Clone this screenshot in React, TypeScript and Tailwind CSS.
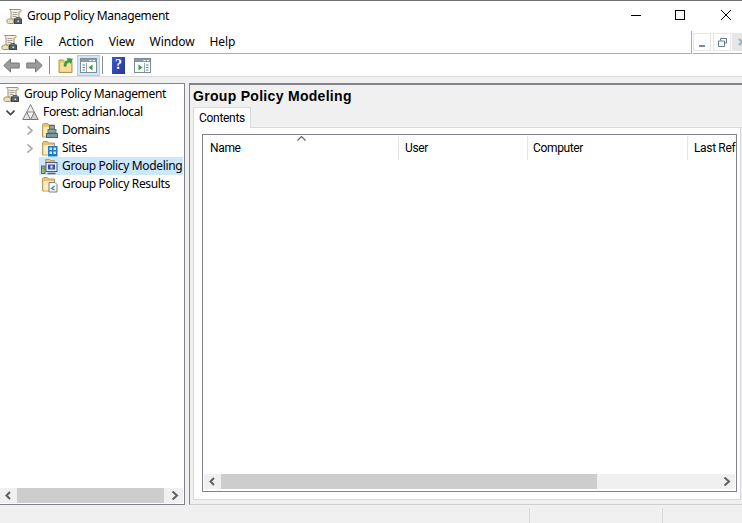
import type { ReactNode } from "react";

const font = { fontFamily: '"Noto Sans", "Open Sans", sans-serif' };

function ScrollIcon() {
  return (
    <svg width="17" height="17" viewBox="0 0 17 17" className="shrink-0">
      <path d="M3.500 1.500h11c1 0 1 2.500-.5 2.500H13v7H5V4C5 3 4 2 3.500 1.500z" fill="#f6efd6" stroke="#9c9272" />
      <path d="M6.500 4.500h5M6.500 6.500h5M6.500 8.500h4" stroke="#a3a3a3" />
      <path d="M1 12c1.500-1.500 5-1.500 6.500 0v3.500H2.500c-1.500 0-2-2-1.500-3.500z" fill="#eadfb6" stroke="#a4996f" />
      <rect x="8.500" y="11" width="7" height="4.500" fill="#56656d" stroke="#3a474e" />
      <path d="M10 11V9.500h4V11" fill="none" stroke="#56626a" />
      <rect x="11.500" y="12.500" width="1.500" height="1.500" fill="#dfe6ea" />
    </svg>
  );
}

function ForestIcon() {
  return (
    <svg width="17" height="16" viewBox="0 0 17 16" className="shrink-0">
      <path d="M8.500 .5l3.800 7.500H4.700z" fill="#efefef" stroke="#858585" />
      <path d="M4.700 8l3.800 7.500H.8z" fill="#e2e2e2" stroke="#777" />
      <path d="M12.300 8l3.900 7.500H8.500z" fill="#cfcfcf" stroke="#777" />
    </svg>
  );
}

function FolderBase() {
  return (
    <>
      <path d="M1.500 15V2.500l1-1h4l1.500 1.500h5.500V15z" fill="#e6c272" stroke="#bd9c60" />
      <path d="M2.500 5h10v9.500h-10z" fill="#fbeebc" />
    </>
  );
}

function DomainsIcon() {
  return (
    <svg width="17" height="17" viewBox="0 0 17 17" className="shrink-0">
      <FolderBase />
      <rect x="8.500" y="3.500" width="5" height="3.500" fill="#8ba5a9" stroke="#5c7478" />
      <rect x="7" y="7.500" width="8" height="3.500" fill="#8ba5a9" stroke="#5c7478" />
      <rect x="5.500" y="11.500" width="11" height="4" fill="#7b979b" stroke="#4f6467" />
      <path d="M7.500 13.500h1M10.500 13.500h1M13.500 13.500h1" stroke="#57c05a" />
    </svg>
  );
}

function SitesIcon() {
  return (
    <svg width="17" height="17" viewBox="0 0 17 17" className="shrink-0">
      <FolderBase />
      <rect x="7" y="6" width="9.500" height="10.500" fill="#1f78c8" />
      <path d="M8.500 7.500H11V10H8.500zM12.500 7.500H15V10h-2.500zM8.500 11.500H11V14H8.500zM12.500 11.500H15V14h-2.500z" fill="#cfe9fb" />
    </svg>
  );
}

function ModelingIcon() {
  return (
    <svg width="17" height="17" viewBox="0 0 17 17" className="shrink-0">
      <path d="M4.500 5V1.500h4l1 1h4V5z" fill="#e6c272" stroke="#bd9c60" />
      <rect x=".5" y="8" width="3.500" height="7.500" fill="#a7b38f" stroke="#5d6a55" />
      <rect x="1.300" y="9.500" width="2" height="1.500" fill="#4ea34e" />
      <rect x="5" y="4.500" width="11" height="9" fill="#e6eaf4" stroke="#4e5a7a" />
      <rect x="7" y="6.500" width="7" height="5" fill="#3a4fa8" />
      <path d="M9.500 7.500h2v3h-2z" fill="#dce4fa" />
      <path d="M6.500 15.500h8" stroke="#5a5f6c" strokeWidth="1.500" />
    </svg>
  );
}

function ResultsIcon() {
  return (
    <svg width="17" height="17" viewBox="0 0 17 17" className="shrink-0">
      <FolderBase />
      <path d="M8 6.500h6l2 2v7.500H8z" fill="#fbfbfb" stroke="#7f7f7f" />
      <path d="M13.500 10l-3 2.500 3 1.500" fill="none" stroke="#2c7cc4" strokeWidth="1.200" />
    </svg>
  );
}

function NavArrow({ flip }: { flip?: boolean }) {
  return (
    <svg width="17" height="15" viewBox="0 0 17 15" className={flip ? "shrink-0 -scale-x-100" : "shrink-0"}>
      <path d="M7.500 1L.8 7.500 7.500 14V10h8.700V5H7.500z" fill="#9c9c9c" stroke="#777" />
    </svg>
  );
}

function UpFolderIcon() {
  return (
    <svg width="16" height="18" viewBox="0 0 16 18" className="shrink-0">
      <path d="M1 5.500V16.500h13V5.500H7L5.500 4H1z" fill="#eccb78" stroke="#b59250" />
      <path d="M2 7h11v8.500H2z" fill="#f7df98" />
      <path d="M6 10c0-3 1.500-5 4-6L9 2.500l5.500.5L12.500 7.500 11.300 5.800C9.500 6.500 8 8.500 8 10.500z" fill="#35a83a" stroke="#1f7f28" strokeWidth=".5" />
    </svg>
  );
}

function PaneIcon({ side }: { side: "left" | "right" }) {
  return (
    <svg width="17" height="15" viewBox="0 0 17 15" className="shrink-0">
      <rect x=".5" y=".5" width="16" height="14" fill="#fdfdfd" stroke="#7e8a94" />
      <rect x="1" y="1" width="15" height="3" fill="#8c98a2" />
      <path d="M13 2.500h2M9.500 2.500h2" stroke="#ffffff" />
      {side === "left" ? (
        <>
          <path d="M6.500 5v9" stroke="#9aa4ac" />
          <path d="M2.500 7h2.500M2.500 9.500h2.500M2.500 12h2.500" stroke="#3f86c6" />
          <path d="M12.500 6.500v6L8.500 9.500z" fill="#2fa63a" />
        </>
      ) : (
        <>
          <path d="M10.500 5v9" stroke="#9aa4ac" />
          <path d="M12 7h2.500M12 9.500h2.500M12 12h2.500" stroke="#3f86c6" />
          <path d="M4.500 6.500v6l4-3z" fill="#2fa63a" />
        </>
      )}
    </svg>
  );
}

function HelpIcon() {
  return (
    <div className="flex h-[17px] w-[13px] shrink-0 items-center justify-center bg-gradient-to-br from-[#3d58c8] to-[#28379a] text-[14px] leading-none font-bold text-white" style={{ fontFamily: '"Liberation Serif", serif' }}>
      ?
    </div>
  );
}

function Chevron({ dir, color, bold }: { dir: "left" | "right" | "down"; color: string; bold?: boolean }) {
  const d = dir === "left" ? "M6 1L2.500 4.500 6 8" : dir === "right" ? "M2.500 .5L7 4.500 2.500 8.500" : "M.5 2.500L4.500 6.500 8.500 2.500";
  return (
    <svg width="9" height="9" viewBox="0 0 9 9" className="shrink-0">
      <path d={d} fill="none" stroke={color} strokeWidth={bold ? 2 : 1.6} />
    </svg>
  );
}

function TreeRow({
  indent,
  arrow,
  icon,
  label,
  selected,
}: {
  indent: string;
  arrow?: ReactNode;
  icon: ReactNode;
  label: string;
  selected?: boolean;
}) {
  return (
    <div className={`flex h-[18px] items-center ${indent}`}>
      <div className="flex w-[15px] shrink-0 justify-start pl-[1px]">{arrow}</div>
      <div className={`flex h-[18px] flex-1 items-center gap-[4px] pl-[2px] whitespace-nowrap ${selected ? "bg-[#cce8ff]" : ""}`}>
        {icon}
        <span>{label}</span>
      </div>
    </div>
  );
}

function HScroll({ thumb }: { thumb: string }) {
  return (
    <div className="flex h-[15px] w-full shrink-0 items-center bg-[#f0f0f0]">
      <div className="flex w-[17px] shrink-0 justify-center">
        <Chevron dir="left" color="#606060" bold />
      </div>
      <div className={`h-full shrink-0 bg-[#cdcdcd] ${thumb}`} />
      <div className="flex-1" />
      <div className="flex w-[17px] shrink-0 justify-center">
        <Chevron dir="right" color="#606060" bold />
      </div>
    </div>
  );
}

export default function App() {
  return (
    <div className="flex h-[523px] w-[742px] flex-col overflow-hidden bg-[#f0f0f0] text-[12px] text-black" style={font}>
      {/* title bar */}
      <div className="flex h-[31px] shrink-0 items-center border-t border-[#6f6f6f] bg-white">
        <div className="ml-[6px]">
          <ScrollIcon />
        </div>
        <span className="ml-[4px] tracking-[-0.35px]">Group Policy Management</span>
        <div className="mb-[2px] ml-auto flex items-center">
          <svg width="112" height="14" viewBox="0 0 112 14">
            <path d="M1 7.500h10" stroke="#000" />
            <rect x="45.500" y="2.500" width="9" height="9" fill="none" stroke="#000" />
            <path d="M91 2l10 10M101 2L91 12" stroke="#000" />
          </svg>
        </div>
      </div>

      {/* menu bar */}
      <div className="flex h-[23px] shrink-0 items-stretch bg-white">
        <div className="flex w-[692px] shrink-0 items-center border-r border-b border-[#a8abb2] pl-[1px]">
          <ScrollIcon />
          <div className="ml-[6px] flex gap-[15px] tracking-[-0.1px]">
            <span>File</span>
            <span className="ml-[1px]">Action</span>
            <span>View</span>
            <span>Window</span>
            <span>Help</span>
          </div>
        </div>
        <div className="ml-[1px] flex min-w-0 flex-1 items-center gap-[1px] overflow-hidden border-b border-[#a8abb2]">
          <div className="flex h-[18px] w-[18px] shrink-0 items-end justify-center border border-[#e6e6e6] pb-[3px]">
            <div className="h-[2px] w-[6px] bg-[#7c8a9a]" />
          </div>
          <div className="ml-[1px] flex h-[18px] w-[18px] shrink-0 items-center justify-center border border-[#e6e6e6]">
            <svg width="9" height="9" viewBox="0 0 9 9">
              <path d="M2.500 2.500V.5h6v4.500H6.500M.5 3h6v5.500h-6z" fill="none" stroke="#66768a" />
            </svg>
          </div>
          <div className="flex h-[18px] w-[18px] shrink-0 items-center justify-start bg-[#e6e6e6] pl-[6px]">
            <svg width="8" height="8" viewBox="0 0 8 8">
              <path d="M1 1l6 6M7 1L1 7" stroke="#a0aebe" strokeWidth="2" />
            </svg>
          </div>
        </div>
      </div>

      {/* toolbar */}
      <div className="flex h-[23px] shrink-0 items-center border-b border-[#d9d9d9] bg-white pl-[3px]">
        <NavArrow />
        <div className="ml-[6px]">
          <NavArrow flip />
        </div>
        <div className="ml-[6px] h-[18px] w-px bg-[#8c8c8c]" />
        <div className="ml-[8px]">
          <UpFolderIcon />
        </div>
        <div className="ml-[3px] flex h-[21px] w-[23px] items-center justify-center border border-[#99d1ff] bg-[#cce8ff]">
          <PaneIcon side="left" />
        </div>
        <div className="ml-[2px] h-[18px] w-px bg-[#8c8c8c]" />
        <div className="ml-[9px]">
          <HelpIcon />
        </div>
        <div className="ml-[9px]">
          <PaneIcon side="right" />
        </div>
      </div>

      {/* main split */}
      <div className="mt-[6px] flex min-h-0 flex-1">
        {/* tree */}
        <div className="flex w-[185px] shrink-0 flex-col border-t border-r border-b border-[#82828c] bg-white pr-[1px] pb-[1px]">
          <div className="flex-1 pt-[1px] tracking-[-0.35px]">
            <div className="flex h-[18px] items-center gap-[4px] pl-[3px] whitespace-nowrap">
              <ScrollIcon />
              <span>Group Policy Management</span>
            </div>
            <TreeRow indent="pl-[5px]" arrow={<Chevron dir="down" color="#404040" />} icon={<ForestIcon />} label="Forest: adrian.local" />
            <TreeRow indent="pl-[24px]" arrow={<Chevron dir="right" color="#a6a6a6" />} icon={<DomainsIcon />} label="Domains" />
            <TreeRow indent="pl-[24px]" arrow={<Chevron dir="right" color="#a6a6a6" />} icon={<SitesIcon />} label="Sites" />
            <TreeRow indent="pl-[24px]" icon={<ModelingIcon />} label="Group Policy Modeling" selected />
            <TreeRow indent="pl-[24px]" icon={<ResultsIcon />} label="Group Policy Results" />
          </div>
          <HScroll thumb="w-[147px]" />
        </div>

        {/* details */}
        <div className="ml-[4px] flex min-w-0 flex-1 flex-col border-t-2 border-b border-l border-[#82828c] border-b-[#d0d0d0] pl-[3px]">
          <div className="h-[22px] shrink-0 pt-[2px] text-[14px] leading-[18px] font-bold tracking-[0.3px]" style={{ fontFamily: '"Liberation Sans", sans-serif' }}>
            Group Policy Modeling
          </div>
          <div className="flex h-[21px] shrink-0" style={{ fontFamily: "Roboto, sans-serif" }}>
            <div className="flex w-[58px] items-center justify-center border-t border-r border-l border-[#d9d9d9] bg-white tracking-[-0.3px]">
              Contents
            </div>
            <div className="flex-1 border-b border-[#d9d9d9]" />
          </div>
          <div className="mr-[1px] mb-[4px] flex min-h-0 flex-1 flex-col border-r border-b border-l border-[#d9d9d9] bg-white pt-[6px] pr-[3px] pb-[7px] pl-[8px]">
            <div className="flex min-h-0 flex-1 flex-col border border-[#82828c] bg-white px-[1px] pb-[2px]">
              <div className="-mx-[1px] mt-[1px] flex h-[24px] shrink-0 overflow-hidden tracking-[-0.35px] whitespace-nowrap" style={{ fontFamily: "Roboto, sans-serif" }}>
                <div className="relative flex w-[196px] shrink-0 items-center border-r border-[#e5e5e5] pl-[7px]">
                  Name
                  <svg width="9" height="5" viewBox="0 0 9 5" className="absolute top-0 left-[94px]">
                    <path d="M.5 4.500L4.500 .5l4 4" fill="none" stroke="#666666" strokeWidth="1.200" />
                  </svg>
                </div>
                <div className="flex w-[129px] shrink-0 items-center border-r border-[#e5e5e5] pl-[6px]">User</div>
                <div className="flex w-[160px] shrink-0 items-center border-r border-[#e5e5e5] pl-[5px]">Computer</div>
                <div className="flex items-center pl-[6px]">Last Ref</div>
              </div>
              <div className="flex-1" />
              <HScroll thumb="w-[376px]" />
            </div>
          </div>
        </div>
      </div>

      {/* status bar */}
      <div className="flex h-[18px] shrink-0 items-end">
        <div className="h-[15px] w-[530px] border-r border-[#d9d9d9]" />
        <div className="h-[15px] w-[133px] border-r border-[#d9d9d9]" />
      </div>
    </div>
  );
}
